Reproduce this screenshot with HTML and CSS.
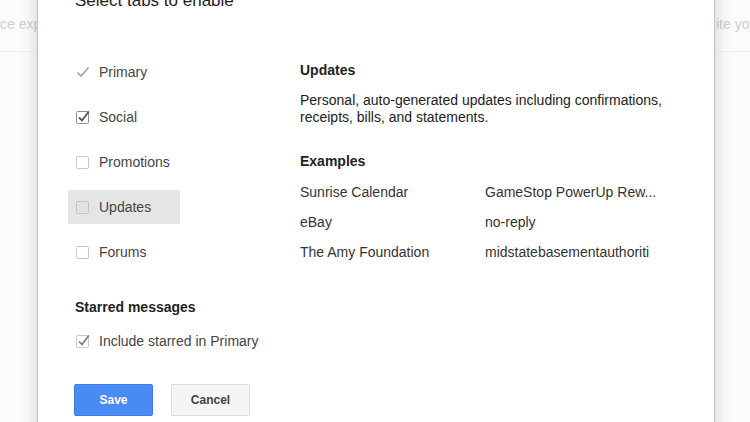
FILE: index.html
```html
<!DOCTYPE html>
<html>
<head>
<meta charset="utf-8">
<link rel="stylesheet" href="styles.css">
</head>
<body>
<div class="page">
  <div class="bgbar">
    <span class="bg-left">ce expanded view</span>
    <span class="bg-right">ite your message</span>
  </div>
</div>

<div class="dialog">
  <div class="title">Select tabs to enable</div>
  <div class="body">
    <div class="tabs">
      <div class="tab">
        <svg class="cb" viewBox="0 0 16 16"><path d="M2.5 8.5 L6 12 L13.5 3.5" fill="none" stroke="#a0a0a0" stroke-width="1.6"/></svg>
        <span>Primary</span>
      </div>
      <div class="tab">
        <svg class="cb" viewBox="0 0 16 16"><rect x="1.5" y="2.5" width="12" height="12" rx="1" fill="#fff" stroke="#8b8f9a"/><path d="M4 8.5 L7 11.5 L13.8 2.5" fill="none" stroke="#4a5466" stroke-width="1.8"/></svg>
        <span>Social</span>
      </div>
      <div class="tab">
        <svg class="cb" viewBox="0 0 16 16"><rect x="1.5" y="2.5" width="12" height="12" rx="1" fill="#fff" stroke="#c8c8c8"/></svg>
        <span>Promotions</span>
      </div>
      <div class="tab active">
        <svg class="cb" viewBox="0 0 16 16"><rect x="1.5" y="2.5" width="12" height="12" rx="1" fill="#e2e2e2" stroke="#c4c4c4"/></svg>
        <span>Updates</span>
      </div>
      <div class="tab">
        <svg class="cb" viewBox="0 0 16 16"><rect x="1.5" y="2.5" width="12" height="12" rx="1" fill="#fff" stroke="#c8c8c8"/></svg>
        <span>Forums</span>
      </div>
    </div>
    <div class="info">
      <div class="heading">Updates</div>
      <p class="desc">Personal, auto-generated updates including confirmations,<br>receipts, bills, and statements.</p>
      <div class="heading ex">Examples</div>
      <div class="examples">
        <span>Sunrise Calendar</span><span>GameStop PowerUp Rew...</span>
        <span>eBay</span><span>no-reply</span>
        <span>The Amy Foundation</span><span>midstatebasementauthoriti</span>
      </div>
    </div>
  </div>
  <div class="starred">
    <div class="heading">Starred messages</div>
    <div class="check-row">
      <svg class="cb" viewBox="0 0 16 16"><rect x="1.5" y="2.5" width="12" height="12" rx="1" fill="#fff" stroke="#c8c8c8"/><path d="M4 8.5 L7 11.5 L13.8 2.5" fill="none" stroke="#7a7a7a" stroke-width="1.7"/></svg>
      <span>Include starred in Primary</span>
    </div>
  </div>
  <div class="buttons">
    <button class="btn save">Save</button>
    <button class="btn cancel">Cancel</button>
  </div>
</div>
</body>
</html>
```

FILE: styles.css
```css
* { box-sizing: border-box; }
html, body {
  margin: 0;
  padding: 0;
  width: 750px;
  height: 422px;
  overflow: hidden;
  background: #fbfbfb;
  font-family: "Liberation Sans", Arial, sans-serif;
  font-size: 14px;
  color: #222;
}
.page { width: 750px; height: 422px; overflow: hidden; }
.bgbar {
  display: flex;
  height: 52px;
  align-items: center;
  border-bottom: 1px solid #f0f0f0;
  padding-bottom: 4px;
  color: #cfcfcf;
  font-size: 14px;
  white-space: nowrap;
}
.bg-left { width: 716px; flex: none; overflow: hidden; }
.bg-right { flex: none; }

.dialog {
  position: absolute;
  left: 37px;
  top: -30px;
  width: 678px;
  height: 470px;
  background: #fff;
  border: 1px solid #c4c4c4;
  box-shadow: 0 4px 16px rgba(0,0,0,0.18);
  padding: 20px 37px 0 37px;
  overflow: hidden;
}
.title {
  font-size: 17px;
  line-height: 20px;
  color: #222;
}
.body {
  display: flex;
  margin-top: 44px;
  margin-left: -7px;
}
.tabs {
  width: 232px;
  flex: none;
  display: flex;
  flex-direction: column;
  gap: 11px;
}
.tab {
  width: 112px;
  height: 34px;
  display: flex;
  align-items: center;
  padding-left: 7px;
  gap: 8px;
  color: #444;
}
.tab.active { background: #e5e5e5; }
.cb { width: 16px; height: 16px; flex: none; }

.info {
  padding-top: 7px;
  width: 380px;
}
.heading {
  font-weight: bold;
  font-size: 14px;
  line-height: 17px;
  color: #222;
}
.desc {
  margin: 13px 0 0 0;
  line-height: 17px;
  color: #222;
}
.heading.ex { margin-top: 27px; }
.examples {
  display: grid;
  grid-template-columns: 185px 1fr;
  line-height: 30px;
  margin-top: 7px;
  color: #333;
  white-space: nowrap;
}

.starred { margin-top: 30px; }
.check-row {
  display: flex;
  align-items: center;
  height: 34px;
  margin-top: 8px;
  gap: 8px;
  color: #444;
}
.buttons {
  display: flex;
  gap: 18px;
  margin-top: 26px;
  margin-left: -1px;
}
.btn {
  width: 79px;
  height: 32px;
  border-radius: 2px;
  font-family: "Liberation Sans", Arial, sans-serif;
  font-weight: bold;
  font-size: 12px;
  padding: 0;
}
.save {
  background: #4a8af4;
  border: 1px solid #3b7be6;
  color: #fff;
}
.cancel {
  background: #f5f5f5;
  border: 1px solid #dcdcdc;
  color: #444;
}
```
